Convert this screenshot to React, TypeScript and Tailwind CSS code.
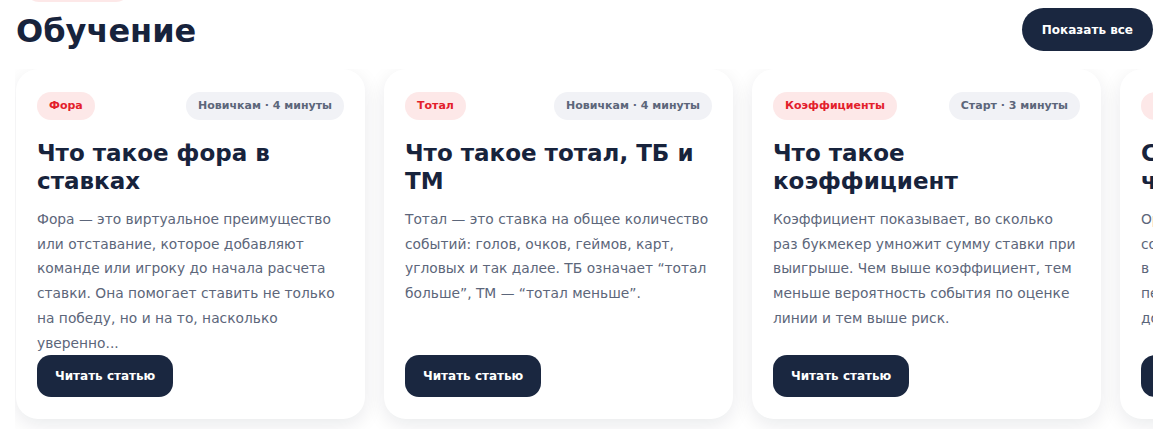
const FONT = '"DejaVu Sans", Verdana, sans-serif'

type Article = {
  tag: string
  meta: string
  title: string
  text: string
}

const ARTICLES: Article[] = [
  {
    tag: 'Фора',
    meta: 'Новичкам · 4 минуты',
    title: 'Что такое фора в ставках',
    text: 'Фора — это виртуальное преимущество или отставание, которое добавляют команде или игроку до начала расчета ставки. Она помогает ставить не только на победу, но и на то, насколько уверенно...',
  },
  {
    tag: 'Тотал',
    meta: 'Новичкам · 4 минуты',
    title: 'Что такое тотал, ТБ и ТМ',
    text: 'Тотал — это ставка на общее количество событий: голов, очков, геймов, карт, угловых и так далее. ТБ означает “тотал больше”, ТМ — “тотал меньше”.',
  },
  {
    tag: 'Коэффициенты',
    meta: 'Старт · 3 минуты',
    title: 'Что такое коэффициент',
    text: 'Коэффициент показывает, во сколько раз букмекер умножит сумму ставки при выигрыше. Чем выше коэффициент, тем меньше вероятность события по оценке линии и тем выше риск.',
  },
  {
    tag: 'Типы ставок',
    meta: 'Новичкам · 5 минут',
    title: 'Ставки экспресс: частые ошибки',
    text: 'Ординар — ставка на одно событие. Его сочетание с несколькими исходами в\u00a0одном купоне называют экспрессом, перебор экспрессов — системой, доступной опытным игрокам.',
  },
]

function ArticleCard({ article }: { article: Article }) {
  return (
    <div className="flex h-[350px] w-[349px] shrink-0 flex-col rounded-[22px] bg-white px-[21px] pt-[23px] pb-[22px] shadow-[0_6px_20px_rgba(15,23,42,0.09)]">
      <div className="flex items-center justify-between">
        <span className="flex h-7 items-center rounded-full bg-[#fde8e8] px-3 text-[11px] font-bold text-[#e3202b]">
          {article.tag}
        </span>
        <span className="flex h-7 items-center rounded-full bg-[#f1f2f6] px-3 text-[11px] font-bold text-[#5c667a]">
          {article.meta}
        </span>
      </div>
      <h3 className="mt-[19px] text-[23px] leading-[28px] font-bold text-[#17233c]">
        {article.title}
      </h3>
      <p className="mt-3 pr-[2px] text-[13.8px] leading-[24.7px] text-[#5c667a]">
        {article.text}
      </p>
      <button className="mt-auto h-[42px] w-fit shrink-0 rounded-[14px] bg-[#1a2740] px-[18px] text-[12px] font-bold text-white">
        Читать статью
      </button>
    </div>
  )
}

export default function App() {
  return (
    <main
      className="h-[429px] overflow-hidden bg-white px-[15px]"
      style={{ fontFamily: FONT }}
    >
      <div className="-mt-[26px] ml-[10px] h-7 w-[105px] rounded-full bg-[#fde8e8]" />
      <header className="flex items-center justify-between pt-[5px] pl-px">
        <h2 className="pt-[3px] text-[32px] leading-[42px] font-bold text-[#17233c]">
          Обучение
        </h2>
        <button className="h-[43px] rounded-full bg-[#1a2740] px-5 text-[12px] font-bold text-white">
          Показать все
        </button>
      </header>
      <div className="mt-[17px] flex gap-[19px] overflow-hidden pl-px pb-4">
        {ARTICLES.map((a) => (
          <ArticleCard key={a.title} article={a} />
        ))}
      </div>
    </main>
  )
}
